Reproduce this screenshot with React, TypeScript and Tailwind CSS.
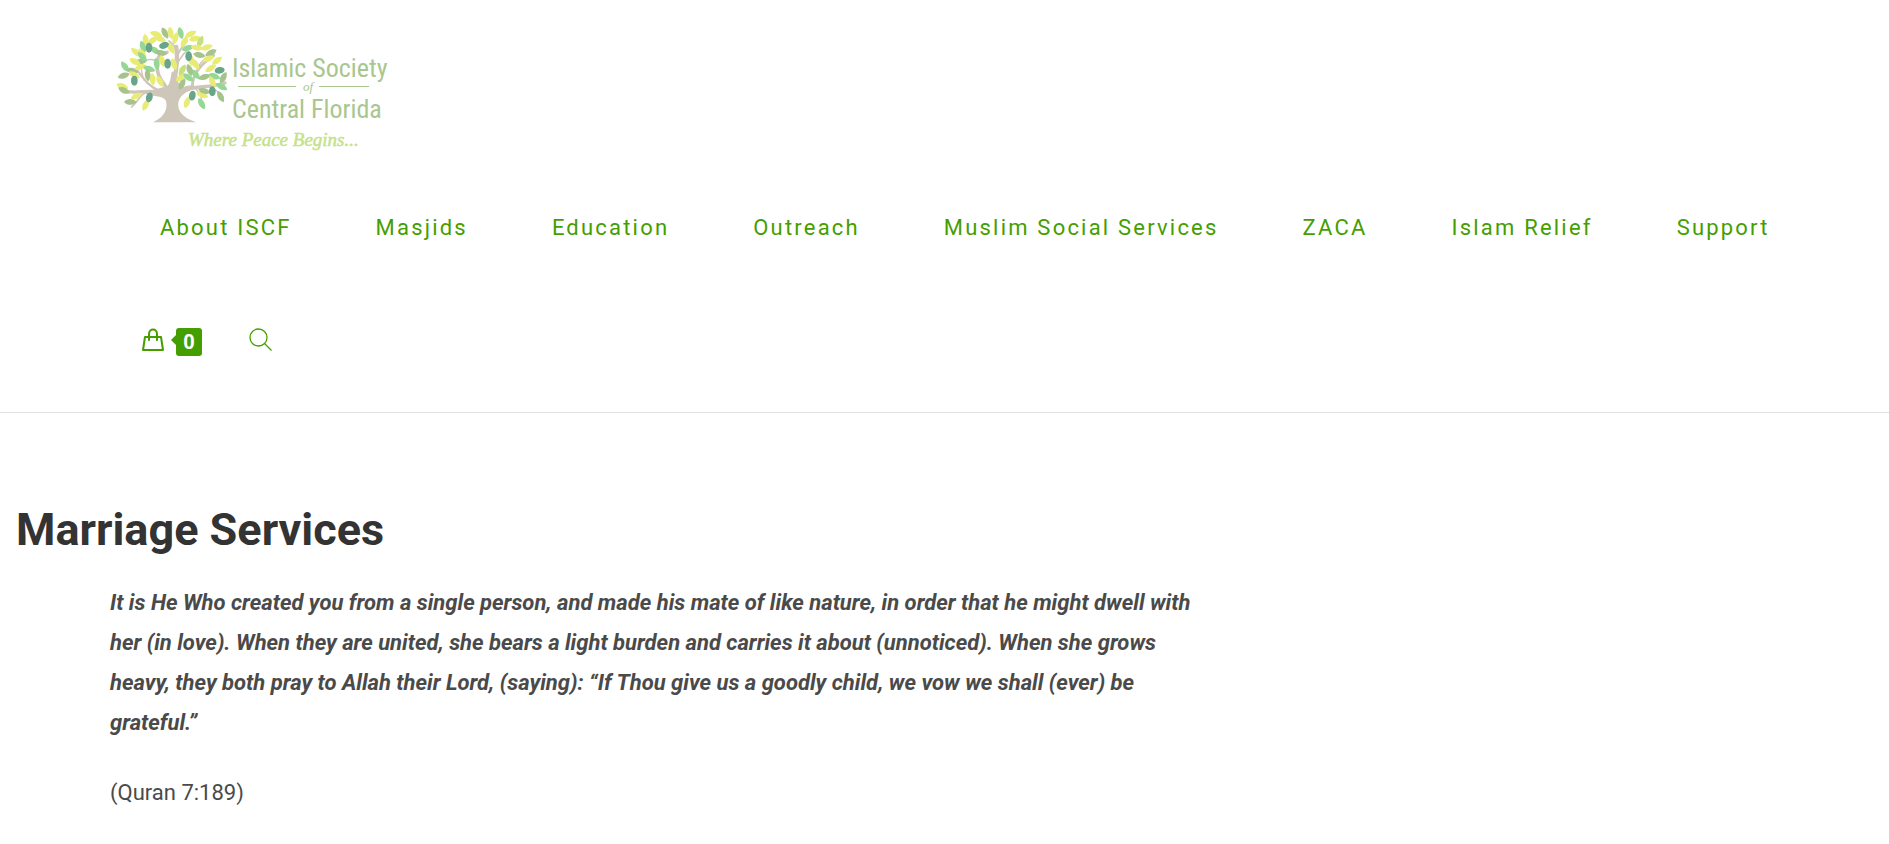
import React from 'react';

type Leaf = [x: number, y: number, angle: number, color: string];

const YELLOW = '#e8ec76';
const LIME = '#c6e07f';
const MINT = '#95d795';
const SAGE = '#a6c38e';

const leaves: Leaf[] = [
  [153, 57, 15, YELLOW], [165, 71, 25, YELLOW], [180, 54, 62, SAGE], [197, 54, 80, YELLOW], [211, 70, 105, YELLOW],
  [227, 54, 75, MINT], [257, 57, -25, YELLOW], [270, 71, -12, YELLOW], [286, 80, -68, LIME], [238, 80, -60, YELLOW],
  [248, 99, -18, MINT], [276, 98, 8, YELLOW], [305, 97, -20, YELLOW], [122, 75, 82, YELLOW], [143, 76, -35, YELLOW],
  [114, 95, 70, MINT], [93, 112, 42, YELLOW], [112, 116, 55, YELLOW], [150, 106, 35, MINT], [168, 114, 10, SAGE],
  [198, 100, 60, YELLOW], [108, 139, -8, SAGE], [90, 140, 28, YELLOW], [112, 125, 45, MINT], [60, 155, 55, MINT],
  [82, 167, 12, SAGE], [107, 156, -15, YELLOW], [133, 162, 18, MINT], [128, 180, 85, SAGE], [155, 147, 82, MINT],
  [172, 138, 75, YELLOW], [207, 148, 72, YELLOW], [56, 182, -18, SAGE], [52, 214, 20, YELLOW], [57, 226, 25, SAGE],
  [88, 180, 30, YELLOW], [76, 261, 0, SAGE], [95, 243, -22, YELLOW], [143, 193, 85, YELLOW], [165, 199, 60, YELLOW],
  [122, 270, -65, YELLOW], [228, 187, -35, YELLOW], [231, 207, -62, SAGE], [250, 187, 35, MINT], [272, 178, 50, MINT],
  [254, 165, 70, SAGE], [272, 148, 60, YELLOW], [232, 165, -60, LIME], [283, 120, 12, SAGE], [318, 113, -28, SAGE],
  [310, 131, -20, YELLOW], [336, 137, -38, YELLOW], [317, 160, -32, YELLOW], [298, 186, -15, SAGE], [328, 184, 20, MINT],
  [322, 200, 65, YELLOW], [355, 188, -62, SAGE], [350, 215, 28, MINT], [347, 245, 62, SAGE], [290, 266, 60, MINT],
  [246, 262, -70, YELLOW], [292, 240, 20, YELLOW], [298, 228, 15, SAGE], [258, 135, 80, YELLOW],
];

const olives = [
  [132, 98, 0], [177, 91, 70], [188, 146, 0], [251, 124, 0], [344, 166, 80],
  [88, 197, 0], [133, 247, 15], [262, 242, 10], [322, 229, 0],
];

const branches: [d: string, width: number][] = [
  ['M196 240 C180 200 150 190 158 140 C160 120 170 112 186 112', 11],
  ['M158 150 C156 132 140 130 112 138', 5],
  ['M204 230 C208 180 222 150 214 96', 13],
  ['M214 110 C212 96 200 84 192 78', 5],
  ['M216 130 C218 108 232 98 246 78', 6],
  ['M214 150 C232 120 240 108 262 96', 5],
  ['M262 215 C262 180 282 150 326 122', 9],
  ['M280 160 C284 140 300 128 322 124', 4],
  ['M160 226 C130 214 116 190 98 168', 7],
  ['M118 196 C110 182 112 172 108 160', 4],
  ['M190 238 C150 220 110 236 66 230', 10],
  ['M130 228 C104 238 98 262 80 276', 5],
  ['M66 230 C54 228 46 220 40 216', 3],
  ['M210 240 C250 208 300 222 360 204', 10],
  ['M262 216 C280 224 286 236 290 254', 4],
  ['M300 214 C324 216 334 224 344 236', 4],
  ['M264 200 C250 186 244 184 236 190', 3],
];

const Logo = () => (
  <svg width="285" height="140" viewBox="105 15 285 140" role="img" aria-label="Islamic Society of Central Florida">
    <g transform="translate(105 15) scale(0.3333)">
      <g fill="none" stroke="#cfc6ba" strokeLinecap="round">
        {branches.map(([d, width]) => (
          <path key={d} d={d} strokeWidth={width} />
        ))}
      </g>
      <path
        fill="#cfc6ba"
        d="M144 322 C180 306 190 280 182 256 C172 240 140 246 118 234 C150 224 166 218 178 216 C190 220 196 200 200 170 L216 170 C216 200 222 214 236 216 C256 208 270 212 284 218 C250 226 226 236 220 262 C216 290 236 310 274 322 Z"
      />
      {leaves.map(([x, y, angle, color], i) => (
        <path
          key={i}
          d="M-19 0 C-9 -12 9 -11 19 0 C9 11 -9 12 -19 0 Z"
          fill={color}
          transform={`translate(${x} ${y}) rotate(${angle})`}
        />
      ))}
      {olives.map(([x, y, angle]) => (
        <ellipse key={x} rx="10" ry="15" fill="#68a58a" transform={`translate(${x} ${y}) rotate(${angle})`} />
      ))}
    </g>
    <g fill="#a9c68f" fontFamily="'Roboto Condensed', Roboto, sans-serif" fontSize="26">
      <text x="232" y="77">Islamic Society</text>
      <text x="232" y="118">Central Florida</text>
    </g>
    <path d="M238 86.500 H296 M319 86.500 H369" stroke="#a9c68f" />
    <text x="303" y="91" fill="#a9c68f" fontFamily="'Liberation Serif', serif" fontStyle="italic" fontSize="13">
      of
    </text>
    <text
      x="188" y="146" fill="#c5e287" stroke="#c5e287" strokeWidth="0.5"
      fontFamily="'Liberation Serif', serif" fontStyle="italic" fontSize="19"
    >
      Where Peace Begins...
    </text>
  </svg>
);

const menuItems = [
  'About ISCF', 'Masjids', 'Education', 'Outreach', 'Muslim Social Services', 'ZACA', 'Islam Relief', 'Support',
];

const BagIcon = () => (
  <svg width="24" height="24" viewBox="0 0 24 24" fill="none" stroke="currentColor" strokeWidth="2" strokeLinejoin="round" strokeLinecap="round">
    <path d="M4 9 H20 L22 22 H2 Z" />
    <path d="M8 12 V6 C8 0 16 0 16 6 V12" />
  </svg>
);

const SearchIcon = () => (
  <svg width="24" height="24" viewBox="0 0 24 24" fill="none" stroke="currentColor" strokeWidth="1.300">
    <circle cx="9.500" cy="9.500" r="8.500" />
    <path d="M15.500 15.500 L22.500 22.500" />
  </svg>
);

const App: React.FC = () => {
  return (
    <div className="min-h-screen bg-white font-[Roboto,sans-serif] text-[22px] text-[#4a4a4a]">
      <header className="border-b border-[#e2e2e2] pb-4">
        <div className="px-[105px] pt-[15px] pb-4">
          <a href="#" className="block w-fit">
            <Logo />
          </a>
        </div>
        <nav className="flex flex-wrap pl-[118px] text-[#459e00]">
          {menuItems.map((item) => (
            <a key={item} href="#" className="px-[42px] leading-[113px] tracking-widest">
              {item}
            </a>
          ))}
        </nav>
        <div className="flex h-28 items-center gap-[47px] px-[141px] text-[#459e00]">
          <a href="#" aria-label="Cart" className="flex items-center">
            <BagIcon />
            <span className="ml-1.5 h-0 w-0 border-y-[5px] border-r-[5px] border-y-transparent border-r-[#459e00]" />
            <span className="mt-1 flex h-7 w-[26px] items-center justify-center rounded-[3px] bg-[#459e00] text-[20px] font-bold text-white">
              0
            </span>
          </a>
          <button type="button" aria-label="Search">
            <SearchIcon />
          </button>
        </div>
      </header>

      <main className="px-4 pt-[84px]">
        <h1 className="mb-5 text-[45px] leading-[66px] font-bold text-[#333]">Marriage Services</h1>
        <blockquote className="ml-[94px] max-w-[1100px] leading-10">
          <p className="font-bold italic">
            It is He Who created you from a single person, and made his mate of like nature, in order that he might
            dwell with her (in love). When they are united, she bears a light burden and carries it about (unnoticed).
            When she grows heavy, they both pray to Allah their Lord, (saying): “If Thou give us a goodly child, we vow
            we shall (ever) be grateful.”
          </p>
          <p className="mt-[30px]">(Quran 7:189)</p>
        </blockquote>
      </main>
    </div>
  );
};

export default App;
